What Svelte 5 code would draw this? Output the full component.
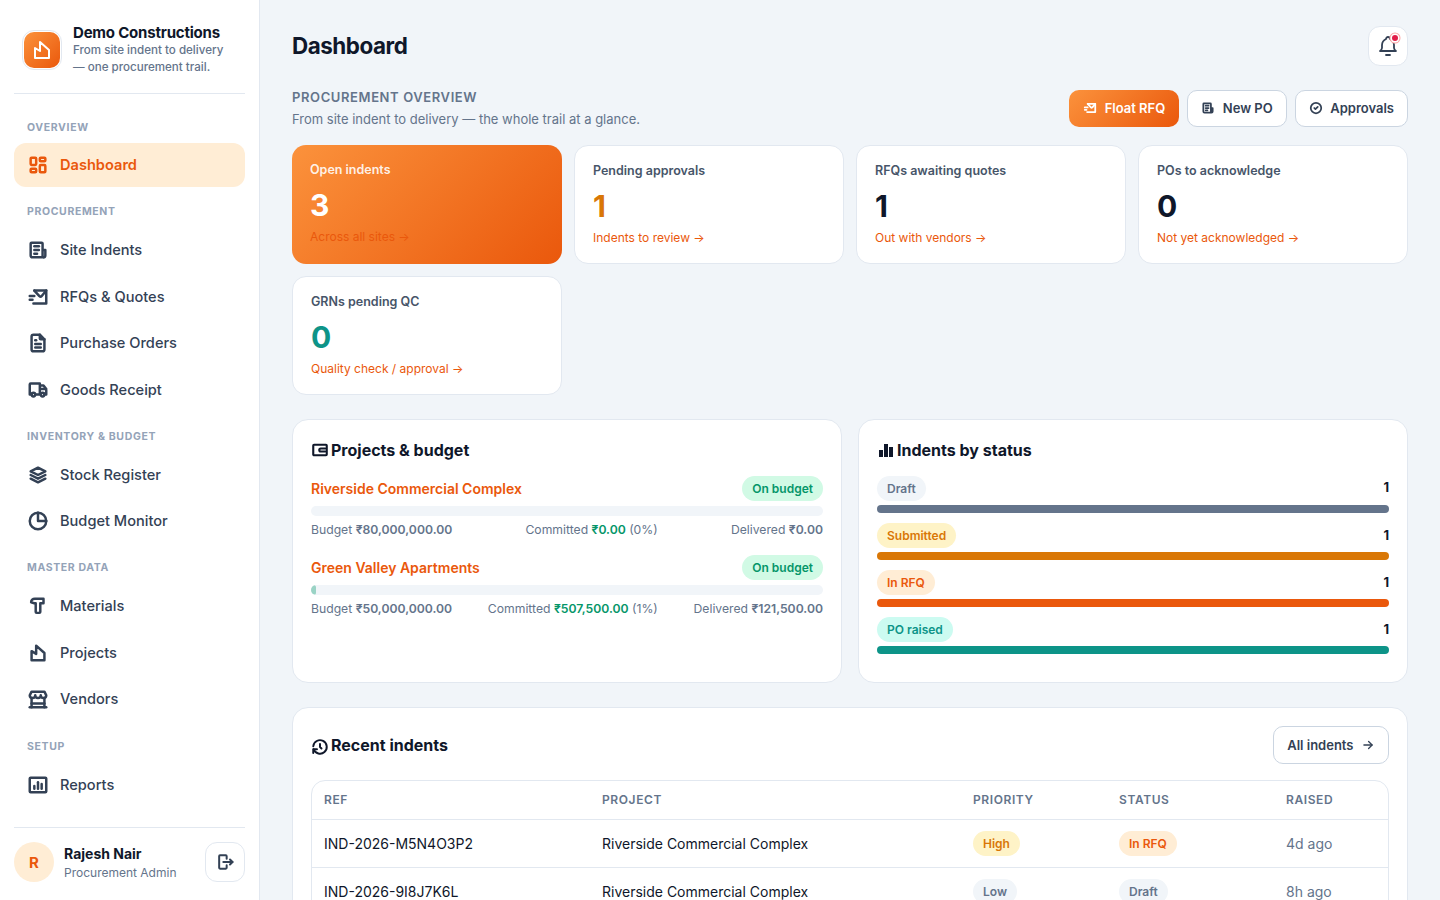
<script>
	const icons = {
		dashboard: ['M5 4h4a1 1 0 0 1 1 1v6a1 1 0 0 1-1 1H5a1 1 0 0 1-1-1V5a1 1 0 0 1 1-1z', 'M5 16h4a1 1 0 0 1 1 1v2a1 1 0 0 1-1 1H5a1 1 0 0 1-1-1v-2a1 1 0 0 1 1-1z', 'M15 12h4a1 1 0 0 1 1 1v6a1 1 0 0 1-1 1h-4a1 1 0 0 1-1-1v-6a1 1 0 0 1 1-1z', 'M15 4h4a1 1 0 0 1 1 1v2a1 1 0 0 1-1 1h-4a1 1 0 0 1-1-1V5a1 1 0 0 1 1-1z'],
		news: ['M17 12h3v6a2 2 0 0 1-2 2H6a2 2 0 0 1-2-2V5a1 1 0 0 1 1-1h11a1 1 0 0 1 1 1v13a2 2 0 0 0 1 2', 'M8 8h5', 'M8 12h5', 'M8 16h3'],
		mail: ['M8 5h13v14H7', 'M8 5l5.5 6a2 2 0 0 0 2.6 0L21 5', 'M3 11h5', 'M3 15h3'],
		file: ['M14 3v4a1 1 0 0 0 1 1h4', 'M17 21H7a2 2 0 0 1-2-2V5a2 2 0 0 1 2-2h7l5 5v11a2 2 0 0 1-2 2z', 'M9 9h1', 'M9 13h6', 'M9 17h6'],
		truck: ['M5 17a2 2 0 1 0 4 0a2 2 0 1 0-4 0', 'M15 17a2 2 0 1 0 4 0a2 2 0 1 0-4 0', 'M5 17H3V6a1 1 0 0 1 1-1h10v12m-5 0h6m4 0h2v-6h-7m0-4h4l3 4'],
		stack: ['M12 4L4 8l8 4 8-4-8-4', 'M4 12l8 4 8-4', 'M4 16l8 4 8-4'],
		pie: ['M21 12a9 9 0 1 1-9-9', 'M12 3a9 9 0 0 1 9 9h-9z'],
		hammer: ['M4.5 8a4 4 0 0 1 4-4H18v5h-3.5v9.5a1 1 0 0 1-1 1h-3a1 1 0 0 1-1-1V9H8z'],
		factory: ['M5 20V10l5 3V4l9 8v8z'],
		store: ['M3 21h18', 'M3 8a3 3 0 0 0 6 0a3 3 0 0 0 6 0a3 3 0 0 0 6 0l-2-4H5L3 8', 'M5 21V11', 'M19 21V11', 'M5 17h14'],
		report: ['M4 4h16a1 1 0 0 1 1 1v14a1 1 0 0 1-1 1H4a1 1 0 0 1-1-1V5a1 1 0 0 1 1-1z', 'M8 16v-3', 'M12 16V9', 'M16 16v-5'],
		logout: ['M14 8V5a1 1 0 0 0-1-1H6a1 1 0 0 0-1 1v14a1 1 0 0 0 1 1h7a1 1 0 0 0 1-1v-3', 'M10 12h11', 'M18 9l3 3-3 3'],
		bell: ['M10 5a2 2 0 1 1 4 0a7 7 0 0 1 4 6v3a4 4 0 0 0 2 3H4a4 4 0 0 0 2-3v-3a7 7 0 0 1 4-6', 'M10 21h4'],
		check: ['M12 3a9 9 0 1 0 0 18a9 9 0 0 0 0-18z', 'M9 12l2 2 4-4'],
		wallet: ['M4 5h16a1 1 0 0 1 1 1v12a1 1 0 0 1-1 1H4a1 1 0 0 1-1-1V6a1 1 0 0 1 1-1z', 'M19 10h-6a2 2 0 0 0 0 4h6'],
		history: ['M12 8v4l2 2', 'M3.05 11a9 9 0 1 1 .5 4', 'M3 20v-5h5'],
		arrow: ['M5 12h14', 'M13 6l6 6-6 6']
	};

	const navGroups = [
		{ label: 'OVERVIEW', items: [{ name: 'Dashboard', icon: 'dashboard', active: true }] },
		{
			label: 'PROCUREMENT',
			items: [
				{ name: 'Site Indents', icon: 'news' },
				{ name: 'RFQs & Quotes', icon: 'mail' },
				{ name: 'Purchase Orders', icon: 'file' },
				{ name: 'Goods Receipt', icon: 'truck' }
			]
		},
		{
			label: 'INVENTORY & BUDGET',
			items: [
				{ name: 'Stock Register', icon: 'stack' },
				{ name: 'Budget Monitor', icon: 'pie' }
			]
		},
		{
			label: 'MASTER DATA',
			items: [
				{ name: 'Materials', icon: 'hammer' },
				{ name: 'Projects', icon: 'factory' },
				{ name: 'Vendors', icon: 'store' }
			]
		},
		{ label: 'SETUP', items: [{ name: 'Reports', icon: 'report' }] }
	];

	const stats = [
		{ label: 'Open indents', value: '3', link: 'Across all sites →', cls: 'hero' },
		{ label: 'Pending approvals', value: '1', link: 'Indents to review →', cls: 'amber' },
		{ label: 'RFQs awaiting quotes', value: '1', link: 'Out with vendors →', cls: '' },
		{ label: 'POs to acknowledge', value: '0', link: 'Not yet acknowledged →', cls: '' },
		{ label: 'GRNs pending QC', value: '0', link: 'Quality check / approval →', cls: 'teal' }
	];

	const projects = [
		{ name: 'Riverside Commercial Complex', budget: '₹80,000,000.00', committed: '₹0.00', pct: 0, delivered: '₹0.00' },
		{ name: 'Green Valley Apartments', budget: '₹50,000,000.00', committed: '₹507,500.00', pct: 1, delivered: '₹121,500.00' }
	];

	const statuses = [
		{ name: 'Draft', cls: 'draft' },
		{ name: 'Submitted', cls: 'submitted' },
		{ name: 'In RFQ', cls: 'rfq' },
		{ name: 'PO raised', cls: 'raised' }
	];

	const indents = [
		{ ref: 'IND-2026-M5N4O3P2', project: 'Riverside Commercial Complex', priority: 'High', pcls: 'submitted', status: 'In RFQ', scls: 'rfq', raised: '4d ago' },
		{ ref: 'IND-2026-9I8J7K6L', project: 'Riverside Commercial Complex', priority: 'Low', pcls: 'draft', status: 'Draft', scls: 'draft', raised: '8h ago' }
	];
</script>

{#snippet icon(name, size = 22, width = 2.7)}
	<svg class="icon" viewBox="0 0 24 24" style="width:{size}px;height:{size}px" fill="none" stroke="currentColor" stroke-width={width} stroke-linecap="round" stroke-linejoin="round">
		{#each icons[name] as d}
			<path {d} />
		{/each}
	</svg>
{/snippet}

<div class="shell">
	<aside class="sidebar">
		<div class="brand">
			<div class="logo-ring">
				<div class="logo">{@render icon('factory', 24, 2)}</div>
			</div>
			<div>
				<div class="brand-name">Demo Constructions</div>
				<div class="brand-sub">From site indent to delivery — one procurement trail.</div>
			</div>
		</div>

		<nav class="nav">
			{#each navGroups as group}
				<div class="group">
					<div class="group-label">{group.label}</div>
					{#each group.items as item}
						<div class="nav-item" class:active={item.active}>
							{@render icon(item.icon)}
							<span>{item.name}</span>
						</div>
					{/each}
				</div>
			{/each}
		</nav>

		<div class="user">
			<div class="avatar">R</div>
			<div class="user-text">
				<div class="user-name">Rajesh Nair</div>
				<div class="user-role">Procurement Admin</div>
			</div>
			<button class="logout">{@render icon('logout', 20, 2.4)}</button>
		</div>
	</aside>

	<main class="main">
		<header class="topbar">
			<h1>Dashboard</h1>
			<button class="bell">
				{@render icon('bell', 24, 1.8)}
				<span class="dot"></span>
			</button>
		</header>

		<section class="overview">
			<div>
				<div class="overview-title">PROCUREMENT OVERVIEW</div>
				<div class="overview-sub">From site indent to delivery — the whole trail at a glance.</div>
			</div>
			<div class="actions">
				<button class="btn primary">{@render icon('mail', 14, 3)}Float RFQ</button>
				<button class="btn">{@render icon('news', 14, 3)}New PO</button>
				<button class="btn">{@render icon('check', 14, 3)}Approvals</button>
			</div>
		</section>

		<section class="stats">
			{#each stats as s}
				<div class="stat {s.cls}">
					<div class="stat-label">{s.label}</div>
					<div class="stat-value">{s.value}</div>
					<div class="stat-link">{s.link}</div>
				</div>
			{/each}
		</section>

		<section class="panels">
			<div class="panel">
				<h2>{@render icon('wallet', 18, 2.8)}Projects &amp; budget</h2>
				{#each projects as p}
					<div class="project">
						<div class="project-head">
							<span class="project-name">{p.name}</span>
							<span class="pill ok">On budget</span>
						</div>
						<div class="track">
							<div class="fill" style="width:{p.pct}%"></div>
						</div>
						<div class="meta">
							<span>Budget <b>{p.budget}</b></span>
							<span>Committed <b class="green">{p.committed}</b> ({p.pct}%)</span>
							<span>Delivered <b>{p.delivered}</b></span>
						</div>
					</div>
				{/each}
			</div>

			<div class="panel">
				<h2>
					<svg class="icon" viewBox="0 0 18 18" style="width:18px;height:18px" fill="currentColor">
						<rect x="2" y="9" width="4" height="7" />
						<rect x="7" y="3" width="4" height="13" />
						<rect x="12" y="6" width="4" height="10" />
					</svg>
					Indents by status
				</h2>
				{#each statuses as st}
					<div class="status-row">
						<div class="status-head">
							<span class="pill {st.cls}">{st.name}</span>
							<b>1</b>
						</div>
						<div class="status-bar {st.cls}"></div>
					</div>
				{/each}
			</div>
		</section>

		<section class="panel recent">
			<div class="recent-head">
				<h2>{@render icon('history', 18, 2.6)}Recent indents</h2>
				<button class="btn small">All indents{@render icon('arrow', 14, 2.2)}</button>
			</div>
			<div class="table-wrap">
				<table>
					<colgroup>
						<col style="width:278px" />
						<col style="width:371px" />
						<col style="width:146px" />
						<col style="width:167px" />
						<col />
					</colgroup>
					<thead>
						<tr>
							<th>REF</th>
							<th>PROJECT</th>
							<th>PRIORITY</th>
							<th>STATUS</th>
							<th>RAISED</th>
						</tr>
					</thead>
					<tbody>
						{#each indents as row}
							<tr>
								<td>{row.ref}</td>
								<td>{row.project}</td>
								<td><span class="pill {row.pcls}">{row.priority}</span></td>
								<td><span class="pill {row.scls}">{row.status}</span></td>
								<td class="muted">{row.raised}</td>
							</tr>
						{/each}
					</tbody>
				</table>
			</div>
		</section>
	</main>
</div>

<style>
	:global(body) {
		background: #f1f5f9;
		color: #0f172a;
		font-family: Inter, 'Noto Sans', sans-serif;
	}

	.shell {
		display: flex;
		height: 100vh;
		overflow: hidden;
	}

	.icon {
		flex: none;
		display: block;
	}

	.sidebar {
		flex: none;
		box-sizing: border-box;
		width: 260px;
		height: 100vh;
		display: flex;
		flex-direction: column;
		padding: 0 14px 18px;
		background: #fff;
		border-right: 1px solid #e2e8f0;
	}

	.brand {
		display: flex;
		align-items: center;
		gap: 11px;
		padding: 23px 8px 17px;
		border-bottom: 1px solid #e2e8f0;
	}

	.logo-ring {
		flex: none;
		box-sizing: border-box;
		width: 40px;
		height: 40px;
		padding: 1px;
		border: 1px solid #e2e8f0;
		border-radius: 12px;
	}

	.logo {
		width: 100%;
		height: 100%;
		display: flex;
		align-items: center;
		justify-content: center;
		color: #fff;
		border-radius: 10px;
		background: linear-gradient(135deg, #fb923c, #ea580c);
	}

	.brand-name {
		padding-top: 1px;
		font-size: 15px;
		font-weight: 700;
		line-height: 17px;
		letter-spacing: -0.2px;
	}

	.brand-sub {
		margin-top: 1px;
		font-size: 11.6px;
		font-weight: 500;
		line-height: 17px;
		color: #64748b;
	}

	.nav {
		display: flex;
		flex-direction: column;
		gap: 17px;
		padding-top: 11px;
	}

	.group {
		display: flex;
		flex-direction: column;
		gap: 2px;
	}

	.group-label {
		height: 14px;
		margin: 0 13px 7.67px;
		font-size: 10.5px;
		font-weight: 700;
		line-height: 16px;
		letter-spacing: 0.63px;
		color: #94a3b8;
	}

	.group:first-child .group-label {
		margin-top: 15px;
		margin-bottom: 6.67px;
	}

	.nav-item {
		display: flex;
		align-items: center;
		gap: 11px;
		height: 44.5px;
		padding: 0 13px;
		border-radius: 12px;
		font-size: 14.6px;
		font-weight: 500;
		color: #334155;
	}

	.nav-item.active {
		background: #ffedd5;
		color: #ea580c;
		font-weight: 600;
	}

	.user {
		display: flex;
		align-items: center;
		gap: 10px;
		margin-top: auto;
		padding-top: 14px;
		border-top: 1px solid #e2e8f0;
	}

	.avatar {
		width: 40px;
		height: 40px;
		display: flex;
		align-items: center;
		justify-content: center;
		border-radius: 50%;
		background: #ffedd5;
		color: #ea580c;
		font-size: 15px;
		font-weight: 700;
	}

	.user-text {
		flex: 1;
		padding-top: 2px;
	}

	.user-name {
		font-size: 14px;
		font-weight: 700;
		line-height: 20px;
	}

	.user-role {
		font-size: 12px;
		line-height: 18px;
		color: #64748b;
	}

	.logout {
		width: 40px;
		height: 40px;
		display: flex;
		align-items: center;
		justify-content: center;
		padding: 0;
		background: #fff;
		color: #334155;
		border: 1px solid #e2e8f0;
		border-radius: 12px;
	}

	.main {
		flex: 1;
		min-width: 0;
		padding: 26px 32px 32px;
	}

	.topbar {
		display: flex;
		align-items: center;
		justify-content: space-between;
	}

	h1 {
		margin: 0 0 2px;
		font-size: 22.4px;
		font-weight: 700;
		letter-spacing: -0.45px;
	}

	.bell {
		position: relative;
		width: 40px;
		height: 40px;
		display: flex;
		align-items: center;
		justify-content: center;
		padding: 0;
		background: #fff;
		color: #334155;
		border: 1px solid #e2e8f0;
		border-radius: 12px;
	}

	.dot {
		position: absolute;
		top: 8px;
		right: 9px;
		width: 6px;
		height: 6px;
		border-radius: 50%;
		background: #e11d48;
		box-shadow: 0 0 0 1.5px #fff, 0 0 0 2.5px #fca5a5;
	}

	.overview {
		display: flex;
		align-items: center;
		justify-content: space-between;
		margin-top: 22px;
	}

	.overview-title {
		font-size: 13px;
		font-weight: 600;
		line-height: 19px;
		letter-spacing: 0.6px;
		color: #64748b;
	}

	.overview-sub {
		margin-top: 2px;
		font-size: 13px;
		line-height: 20px;
		color: #64748b;
	}

	.actions {
		display: flex;
		gap: 8px;
	}

	.btn {
		display: flex;
		align-items: center;
		gap: 7.5px;
		height: 37px;
		padding: 0 13px 1px;
		background: #fff;
		color: #334155;
		border: 1px solid #cbd5e1;
		border-radius: 10px;
		font-family: inherit;
		font-size: 13px;
		font-weight: 600;
	}

	.btn.primary {
		border: 0;
		padding: 0 14px 1px;
		color: #fff;
		background: linear-gradient(135deg, #fb923c, #ea580c);
	}

	.btn.small {
		height: 38px;
		padding: 0 13px;
	}

	.stats {
		display: grid;
		grid-template-columns: repeat(4, 1fr);
		gap: 12px;
		margin-top: 16px;
	}

	.stat {
		box-sizing: border-box;
		height: 119px;
		padding: 16px 18px;
		background: #fff;
		border: 1px solid #e2e8f0;
		border-radius: 14px;
	}

	.stat-label {
		font-size: 12.5px;
		font-weight: 600;
		line-height: 18px;
		color: #475569;
	}

	.stat-value {
		margin-top: 7px;
		font-size: 30px;
		font-weight: 700;
		line-height: 38px;
	}

	.stat-link {
		margin-top: 4px;
		font-size: 12px;
		line-height: 17px;
		color: #ea580c;
	}

	.stat.amber .stat-value {
		color: #d97706;
	}

	.stat.teal .stat-value {
		color: #0d9488;
	}

	.stat.hero {
		border: 0;
		background: linear-gradient(135deg, #fb923c, #ea580c);
	}

	.stat.hero .stat-label {
		color: rgba(255, 255, 255, 0.9);
	}

	.stat.hero .stat-value {
		color: #fff;
	}

	.panels {
		display: grid;
		grid-template-columns: 1fr 1fr;
		gap: 16px;
		margin-top: 24px;
	}

	.panel {
		box-sizing: border-box;
		height: 264px;
		padding: 18px;
		background: #fff;
		border: 1px solid #e2e8f0;
		border-radius: 16px;
	}

	h2 {
		display: flex;
		align-items: center;
		gap: 2px;
		margin: 0;
		font-size: 16px;
		font-weight: 700;
		line-height: 24px;
	}

	.project {
		margin-top: 14px;
	}

	.project + .project {
		margin-top: 17px;
	}

	.project-head {
		display: flex;
		align-items: center;
		justify-content: space-between;
	}

	.project-name {
		font-size: 14px;
		font-weight: 600;
		color: #ea580c;
	}

	.pill {
		display: inline-block;
		padding: 0 10px;
		border-radius: 999px;
		font-size: 12px;
		font-weight: 600;
		line-height: 25px;
	}

	.ok {
		background: #d1fae5;
		color: #059669;
	}

	.draft {
		background: #f1f5f9;
		color: #64748b;
	}

	.submitted {
		background: #fef3c7;
		color: #d97706;
	}

	.rfq {
		background: #ffedd5;
		color: #ea580c;
	}

	.raised {
		background: #ccfbf1;
		color: #0d9488;
	}

	.track {
		height: 10px;
		margin-top: 5px;
		background: #f1f5f9;
		border-radius: 999px;
		overflow: hidden;
	}

	.fill {
		height: 100%;
		background: #9ad3c5;
		border-radius: 999px;
	}

	.meta {
		display: flex;
		justify-content: space-between;
		margin-top: 6px;
		font-size: 12.2px;
		line-height: 16px;
		color: #64748b;
	}

	.meta b {
		font-weight: 600;
	}

	.meta b.green {
		color: #059669;
	}

	.status-row {
		margin-top: 14px;
	}

	.status-row + .status-row {
		margin-top: 10px;
	}

	.status-head {
		display: flex;
		align-items: flex-start;
		justify-content: space-between;
		font-size: 13px;
		line-height: 23px;
	}

	.status-head b {
		font-weight: 700;
	}

	.status-row + .status-row b {
		margin-top: 1px;
	}

	.status-bar {
		height: 8px;
		margin-top: 4px;
		border-radius: 999px;
	}

	.status-bar.draft {
		background: #64748b;
	}

	.status-bar.submitted {
		background: #d97706;
	}

	.status-bar.rfq {
		background: #ea580c;
	}

	.status-bar.raised {
		background: #0d9488;
	}

	.recent {
		height: auto;
		margin-top: 24px;
	}

	.recent-head {
		display: flex;
		align-items: center;
		justify-content: space-between;
	}

	.recent-head h2 .icon {
		margin-top: 4px;
	}

	.table-wrap {
		margin-top: 16px;
		border: 1px solid #e2e8f0;
		border-radius: 14px;
		overflow: hidden;
	}

	table {
		width: 100%;
		table-layout: fixed;
		border-collapse: collapse;
		font-size: 14px;
	}

	th {
		height: 36px;
		padding: 0 12px 2px;
		text-align: left;
		font-size: 12px;
		font-weight: 600;
		letter-spacing: 0.6px;
		color: #64748b;
		border-bottom: 1px solid #e2e8f0;
	}

	td {
		height: 47px;
		padding: 0 12px;
		border-bottom: 1px solid #e2e8f0;
	}

	.muted {
		color: #64748b;
	}
</style>
